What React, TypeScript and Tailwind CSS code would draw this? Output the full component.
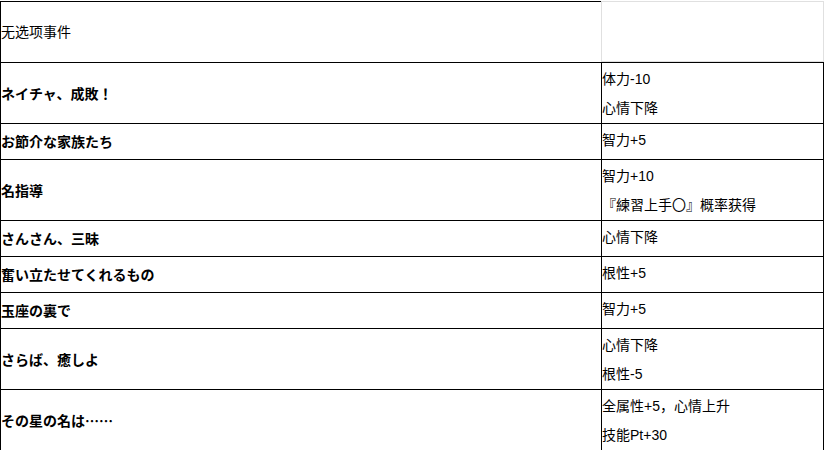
const rows: { name: string; effects: string[] }[] = [
  { name: "ネイチャ、成敗！", effects: ["体力-10", "心情下降"] },
  { name: "お節介な家族たち", effects: ["智力+5"] },
  { name: "名指導", effects: ["智力+10", "『練習上手〇』概率获得"] },
  { name: "さんさん、三昧", effects: ["心情下降"] },
  { name: "奮い立たせてくれるもの", effects: ["根性+5"] },
  { name: "玉座の裏で", effects: ["智力+5"] },
  { name: "さらば、癒しよ", effects: ["心情下降", "根性-5"] },
  { name: "その星の名は……", effects: ["全属性+5，心情上升", "技能Pt+30"] },
]

export default function App() {
  return (
    <div className="w-[825px] h-[450px] overflow-hidden bg-white pt-px text-black text-[14px]">
      <div className="w-[824px] flex flex-col">
        {/* header row */}
        <div className="flex h-[61px]">
          <div className="w-[601px] border-l border-t border-black flex items-center font-['Liberation_Sans','Noto_Sans_CJK_SC',sans-serif]">
            无选项事件
          </div>
          <div className="flex-1 border border-[#e0e0e0]" />
        </div>
        {rows.map((r) => (
          <div
            key={r.name}
            className={`flex border-t border-l border-r border-black ${r.effects.length > 1 ? "h-[61px]" : "h-[36px]"}`}
          >
            <div
              lang="ja"
              className="w-[600px] flex items-center font-bold font-['Noto_Sans_CJK_JP',sans-serif]"
            >
              {r.name}
            </div>
            <div className="flex-1 border-l border-black pt-[2px] font-['Liberation_Sans','Noto_Sans_CJK_SC',sans-serif]">
              {r.effects.map((e) => (
                <div key={e} className="leading-[29px] whitespace-nowrap">
                  {e}
                </div>
              ))}
            </div>
          </div>
        ))}
      </div>
    </div>
  )
}
